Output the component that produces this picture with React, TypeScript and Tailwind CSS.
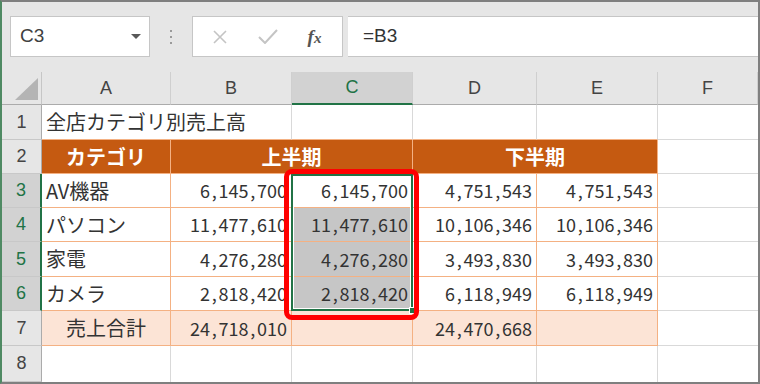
import React from "react";

const COL = ["", "col-start-1", "col-start-2", "col-start-3", "col-start-4", "col-start-5", "col-start-6", "col-start-7"];
const ROW = ["", "row-start-1", "row-start-2", "row-start-3", "row-start-4", "row-start-5", "row-start-6", "row-start-7", "row-start-8", "row-start-9"];

type B = "o" | "g" | "n";
type Cell = {
  r: number;
  c: number;
  span?: boolean;
  text?: string;
  align?: "l" | "r" | "c";
  bg?: string;
  br: B;
  bb: B;
  head?: boolean;
  num?: boolean;
};

const BR: Record<B, string> = {
  o: "border-r border-r-[#f4b183]",
  g: "border-r border-r-[#d9d9d9]",
  n: "",
};
const BB: Record<B, string> = {
  o: "border-b border-b-[#f4b183]",
  g: "border-b border-b-[#d9d9d9]",
  n: "",
};

function Num({ v }: { v: string }) {
  const parts = v.split(",");
  return (
    <span className="whitespace-nowrap">
      {parts.map((p, i) => (
        <React.Fragment key={i}>
          {i > 0 && <span className="inline-block w-[8.5px] text-center">,</span>}
          {p}
        </React.Fragment>
      ))}
    </span>
  );
}

const cells: Cell[] = [];
// sheet row 1 (grid row 2)
cells.push({ r: 2, c: 2, span: true, text: "全店カテゴリ別売上高", align: "l", br: "g", bb: "o" });
cells.push({ r: 2, c: 4, br: "g", bb: "o" });
cells.push({ r: 2, c: 5, br: "g", bb: "o" });
cells.push({ r: 2, c: 6, br: "g", bb: "o" });
cells.push({ r: 2, c: 7, br: "n", bb: "g" });
// sheet row 2
const HB = "bg-[#c55a11]";
cells.push({ r: 3, c: 2, text: "カテゴリ", align: "c", bg: HB, br: "o", bb: "o", head: true });
cells.push({ r: 3, c: 3, span: true, text: "上半期", align: "c", bg: HB, br: "o", bb: "o", head: true });
cells.push({ r: 3, c: 5, span: true, text: "下半期", align: "c", bg: HB, br: "o", bb: "o", head: true });
cells.push({ r: 3, c: 7, br: "n", bb: "g" });
// data rows
const data: [string, string, string, string, string][] = [
  ["AV機器", "6,145,700", "6,145,700", "4,751,543", "4,751,543"],
  ["パソコン", "11,477,610", "11,477,610", "10,106,346", "10,106,346"],
  ["家電", "4,276,280", "4,276,280", "3,493,830", "3,493,830"],
  ["カメラ", "2,818,420", "2,818,420", "6,118,949", "6,118,949"],
];
data.forEach((row, i) => {
  const r = 4 + i;
  cells.push({ r, c: 2, text: row[0], align: "l", br: "o", bb: "o" });
  cells.push({ r, c: 3, text: row[1], align: "r", br: "o", bb: "o", num: true });
  cells.push({ r, c: 4, text: row[2], align: "r", br: "o", bb: "o", num: true, bg: i > 0 ? "bg-[#c6c6c6]" : undefined });
  cells.push({ r, c: 5, text: row[3], align: "r", br: "o", bb: "o", num: true });
  cells.push({ r, c: 6, text: row[4], align: "r", br: "o", bb: "o", num: true });
  cells.push({ r, c: 7, br: "n", bb: "g" });
});
// total row
const PB = "bg-[#fce4d6]";
cells.push({ r: 8, c: 2, text: "売上合計", align: "c", bg: PB, br: "o", bb: "o" });
cells.push({ r: 8, c: 3, text: "24,718,010", align: "r", bg: PB, br: "o", bb: "o", num: true });
cells.push({ r: 8, c: 4, bg: PB, br: "o", bb: "o" });
cells.push({ r: 8, c: 5, text: "24,470,668", align: "r", bg: PB, br: "o", bb: "o", num: true });
cells.push({ r: 8, c: 6, bg: PB, br: "o", bb: "o" });
cells.push({ r: 8, c: 7, br: "n", bb: "g" });
// row 8
for (let c = 2; c <= 7; c++) cells.push({ r: 9, c, br: c === 7 ? "n" : "g", bb: "n" });

const letters = ["A", "B", "C", "D", "E", "F"];

export default function App() {
  return (
    <div className="w-[760px] h-[384px] overflow-hidden border-2 border-[#7f7f7f] border-l-[#4f8a63] bg-[#e6e6e6] font-['Noto_Sans_CJK_JP',sans-serif] text-[#333]">
      {/* toolbar */}
      <div className="h-[70px] flex items-start pt-[14px]">
        <div className="ml-[8px] w-[140px] h-[41px] bg-white border border-[#c6c6c6] flex items-center pl-[9px] pr-[8px]">
          <span className="font-['Liberation_Sans',sans-serif] text-[19px] text-[#404040] flex-1">C3</span>
          <svg width="10" height="6" viewBox="0 0 10 6">
            <polygon points="0,0 10,0 5,5" fill="#595959" />
          </svg>
        </div>
        <div className="w-[42px] h-[41px] flex flex-col items-center justify-center gap-[4px]">
          <span className="block w-[2px] h-[2px] bg-[#9a9a9a]" />
          <span className="block w-[2px] h-[2px] bg-[#9a9a9a]" />
          <span className="block w-[2px] h-[2px] bg-[#9a9a9a]" />
        </div>
        <div className="w-[151px] h-[41px] bg-white border border-[#c6c6c6] flex items-center">
          <div className="w-[52px] flex justify-center pl-[1px]">
            <svg width="14" height="14" viewBox="0 0 14 14">
              <path d="M1 1 L13 13 M13 1 L1 13" stroke="#c4c4c4" strokeWidth="1.6" fill="none" />
            </svg>
          </div>
          <div className="w-[46px] flex justify-center">
            <svg width="20" height="15" viewBox="0 0 20 15">
              <path d="M1 8 L7 14 L19 1" stroke="#c4c4c4" strokeWidth="2" fill="none" />
            </svg>
          </div>
          <div className="flex-1 flex justify-center pr-[4px]">
            <span className="font-['Liberation_Serif',serif] italic font-bold text-[19px] leading-none text-[#555]">
              f<span className="text-[15px]">x</span>
            </span>
          </div>
        </div>
        <div className="ml-[5px] flex-1 h-[41px] bg-white border-y border-[#c6c6c6] flex items-center pl-[15px]">
          <span className="font-['Liberation_Sans',sans-serif] text-[19px] text-[#333]">=B3</span>
        </div>
      </div>

      {/* sheet */}
      <div className="grid grid-cols-[40px_129px_121px_121px_124px_121px_100px] grid-rows-[33px_35px_34px_34px_34px_35px_34px_35px_36px]">
        {/* corner */}
        <div className="col-start-1 row-start-1 bg-[#e6e6e6] border-r border-r-[#c6c6c6] border-b border-b-[#ababab]">
          <svg width="39" height="32" viewBox="0 0 39 32">
            <polygon points="36,6 36,28 13,28" fill="#b4b4b4" />
          </svg>
        </div>
        {letters.map((l, i) => {
          const sel = l === "C";
          return (
            <div
              key={l}
              className={`${COL[i + 2]} row-start-1 flex items-center justify-center font-['Liberation_Sans',sans-serif] text-[18px] border-r border-r-[#cfcfcf] ${
                sel
                  ? "bg-[#d2d2d2] text-[#217346] border-b-2 border-b-[#217346]"
                  : "bg-[#e6e6e6] text-[#444] border-b border-b-[#ababab]"
              }`}
            >
              {l}
            </div>
          );
        })}
        {/* row headers */}
        {[1, 2, 3, 4, 5, 6, 7, 8].map((n) => {
          const sel = n >= 3 && n <= 6;
          return (
            <div
              key={n}
              className={`col-start-1 ${ROW[n + 1]} flex items-center justify-center font-['Liberation_Sans',sans-serif] text-[18px] border-b border-b-[#c8c8c8] ${
                sel
                  ? "bg-[#d2d2d2] text-[#217346] border-r-2 border-r-[#217346]"
                  : "bg-[#e6e6e6] text-[#444] border-r border-r-[#ababab]"
              }`}
            >
              {n}
            </div>
          );
        })}
        {/* cells */}
        {cells.map((cell, i) => (
          <div
            key={i}
            className={`${COL[cell.c]} ${ROW[cell.r]} ${cell.span ? "col-span-2" : ""} ${cell.bg ?? "bg-white"} ${BR[cell.br]} ${BB[cell.bb]} flex items-center overflow-hidden whitespace-nowrap ${
              cell.align === "r" ? "justify-end pr-[4px]" : cell.align === "c" ? "justify-center" : "justify-start pl-[4px]"
            } ${cell.head ? "text-white font-bold text-[20px]" : cell.num ? "text-[18px]" : "text-[20px]"}`}
          >
            {cell.text && (cell.num ? <Num v={cell.text} /> : cell.text)}
          </div>
        ))}
        {/* selection frame */}
        <div className="col-start-4 row-start-4 row-span-4 relative z-10 -ml-[1px] border-2 border-[#217346] shadow-[inset_0_0_0_1px_white] pointer-events-none">
          <div className="absolute -right-[5px] -bottom-[5px] w-[7px] h-[7px] bg-[#217346] border border-white" />
        </div>
        {/* red highlight */}
        <div className="col-start-4 row-start-4 row-span-4 relative z-20 -ml-[8px] -mr-[6px] -mt-[5px] -mb-[9px] border-[5px] border-[#ff0000] rounded-[8px] pointer-events-none" />
      </div>
    </div>
  );
}
